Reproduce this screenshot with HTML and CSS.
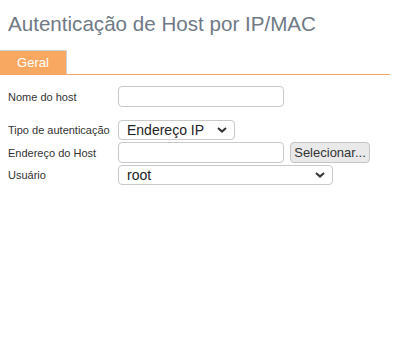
FILE: index.html
```html
<!DOCTYPE html>
<html lang="pt">
<head>
    <meta charset="UTF-8">
    <meta name="viewport" content="width=device-width, initial-scale=1.0">
    <title>Autenticação de Host por IP/MAC</title>
    <link rel="stylesheet" href="styles.css">
</head>
<body>
    <h1 class="page-title">Autenticação de Host por IP/MAC</h1>

    <div class="tabs">
        <a href="#" class="tab active">Geral</a>
    </div>

    <form class="host-form">
        <div class="row">
            <label for="hostname">Nome do host</label>
            <input type="text" id="hostname" class="field">
        </div>

        <div class="row spaced">
            <label for="authtype">Tipo de autenticação</label>
            <select id="authtype" class="field select-short">
                <option>Endereço IP</option>
                <option>Endereço MAC</option>
            </select>
        </div>
        <div class="row">
            <label for="hostaddr">Endereço do Host</label>
            <input type="text" id="hostaddr" class="field">
            <button type="button" class="btn">Selecionar...</button>
        </div>
        <div class="row">
            <label for="user">Usuário</label>
            <select id="user" class="field select-long">
                <option>root</option>
            </select>
        </div>
    </form>
</body>
</html>
```

FILE: styles.css
```css
body {
    font-family: "Liberation Sans", Arial, sans-serif;
    margin: 0;
    padding: 0;
    background-color: #ffffff;
    color: #333;
}

.page-title {
    margin: 0;
    padding: 12px 8px 0 8px;
    font-size: 20.6px;
    font-weight: normal;
    line-height: 23px;
    color: #6f7a86;
}

.tabs {
    margin-top: 15px;
    margin-right: 15px;
    display: flex;
    border-bottom: 1px solid #f5a462;
}

.tab {
    display: block;
    width: 66px;
    height: 23px;
    line-height: 23px;
    text-align: center;
    font-size: 13px;
    color: #ffffff;
    text-decoration: none;
    background-color: #f9a862;
    border-top: 1px solid #cfcfcf;
    border-right: 1px solid #cfcfcf;
}

.host-form {
    padding: 11px 8px 0 8px;
}

.row {
    display: flex;
    align-items: center;
    margin-bottom: 2px;
}

.row.spaced {
    margin-top: 13px;
}

.row label {
    width: 110px;
    font-size: 11px;
    color: #333;
}

.field {
    box-sizing: border-box;
    height: 20px;
    border: 1px solid #c9c9c9;
    border-radius: 4px;
    background-color: #ffffff;
    font-family: "Liberation Sans", Arial, sans-serif;
    color: #222;
    padding: 0 6px;
}

input.field {
    width: 166px;
    height: 21px;
}

select.field {
    -webkit-appearance: none;
    appearance: none;
    font-size: 14px;
    padding: 0 20px 0 8px;
    background-image: url("data:image/svg+xml,%3Csvg xmlns='http://www.w3.org/2000/svg' width='10' height='6' viewBox='0 0 10 6'%3E%3Cpath d='M1 1l4 3.6L9 1' fill='none' stroke='%23333' stroke-width='2'/%3E%3C/svg%3E");
    background-repeat: no-repeat;
    background-position: right 7px center;
}

.select-short {
    width: 117px;
}

.select-long {
    width: 215px;
}

.btn {
    box-sizing: border-box;
    margin-left: 6px;
    height: 21px;
    width: 80px;
    padding: 0;
    font-family: "Liberation Sans", Arial, sans-serif;
    font-size: 13px;
    color: #333;
    background-color: #e9e9e9;
    border: 1px solid #c4c4c4;
    border-radius: 4px;
}
```
